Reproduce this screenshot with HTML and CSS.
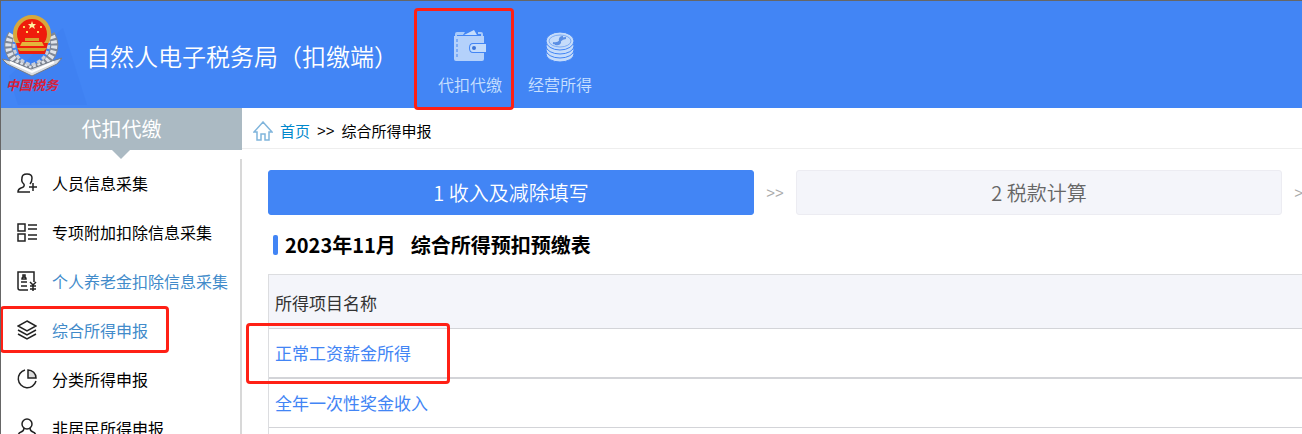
FILE: index.html
```html
<!DOCTYPE html>
<html lang="zh-CN">
  <head>
    <meta charset="UTF-8" />
    <meta name="viewport" content="width=device-width, initial-scale=1.0" />
    <title>自然人电子税务局（扣缴端）</title>
    <link rel="stylesheet" href="styles.css">
  </head>

  <body>
    <header class="header">
      <div class="logo">
        <svg class="logo_shade" viewBox="0 0 86 104" width="86" height="104">
          <path d="M62 27L86 104H17L8 75z" fill="#3f81f2" />
        </svg>
        <svg class="emblem" viewBox="0 0 60 62" width="60" height="62">
          <path d="M10 19C1 33 9 49 29 54C50 49 57 33 49 19" fill="none" stroke="#7f8796" stroke-width="8" />
          <path d="M10 19C1 33 9 49 29 54C50 49 57 33 49 19" fill="none" stroke="#dfe3ea" stroke-width="6" stroke-dasharray="3 2" />
          <path d="M13 23C9 36 16 46 29 50C43 46 49 35 46 23" fill="none" stroke="#c9ced8" stroke-width="3" stroke-dasharray="4 2" />
          <path d="M0 44L9 46L29 54L50 46L60 43L55 49L30 61L5 49z" fill="#d8dce2" stroke="#747b86" />
          <path d="M8 47L30 57L52 47" fill="none" stroke="#fff" stroke-width="2" />
          <ellipse cx="30" cy="19" rx="17" ry="17" fill="#ef1c0c" stroke="#d7a83c" stroke-width="4" />
          <path d="M14 28H46L43 39H17z" fill="#ee1e0c" />
          <path d="M20 27H40L42 31H18z" fill="#e5b53b" />
          <path d="M23 23H37V26H23zM15 33H45L42 36H18z" fill="#d8a02c" />
          <path d="M30 6l1 3h3l-2 2 1 3-3-2-3 2 1-3-2-2h3z" fill="#fff3a0" />
          <path d="M21 11h2v2h-2zM24 16h2v2h-2zM35 16h2v2h-2zM38 11h2v2h-2z" fill="#ffd75a" />
        </svg>
        <span class="logo_text">中国税务</span>
      </div>
      <h1 class="title">自然人电子税务局（扣缴端）</h1>
      <nav class="top_nav">
        <a class="top_item marked" href="#">
          <svg viewBox="0 0 34 34" width="34" height="34">
            <path d="M2 7V4Q2 2 4 2H12L10 5H4V6H28V4H25V2H28Q30 2 30 4V10H2z" fill="#a9cbfa" />
            <path d="M11 5L21 0L24 5z" fill="#c4dcfc" />
            <path d="M1 6H31V13H20Q16 13 16 18T20 23H31V29Q31 31 29 31H3Q1 31 1 29z" fill="#b4d1fb" />
            <path d="M4 9V29" stroke="#4285f5" stroke-width="1" stroke-dasharray="3 2" />
            <path d="M20 14H33V22H20Q17 22 17 18T20 14z" fill="#c4dcfc" />
            <circle cx="21" cy="18" r="2" fill="#3c75d8" />
          </svg>
          代扣代缴
        </a>
        <a class="top_item" href="#">
          <svg viewBox="0 0 34 34" width="34" height="34">
            <g fill="#c5dcfb" stroke="#4285f5">
              <ellipse cx="17" cy="24" rx="14" ry="8" />
              <ellipse cx="17" cy="20" rx="14" ry="8" />
              <ellipse cx="17" cy="16" rx="14" ry="8" />
              <ellipse cx="17" cy="11" rx="14" ry="9" />
            </g>
            <ellipse cx="17" cy="11" rx="11" ry="6" fill="none" stroke="#7dacf4" />
            <path d="M10 13Q15 14 17 11T23 8M20 7Q16 7 17 11T12 14" fill="none" stroke="#5b8fe4" stroke-width="2" />
          </svg>
          经营所得
        </a>
      </nav>
    </header>

    <div class="container">
      <aside class="sidebar">
        <h2 class="sidebar_title">代扣代缴</h2>
        <ul class="menu">
          <li>
            <a class="menu_item" href="#">
              <svg viewBox="0 0 20 20" width="20" height="20">
                <path d="M7 11Q4 9 5 5Q5 1 10 1T15 5Q15 9 13 11M7 11Q8 14 4 15Q1 16 1 19H13M16 10V18M12 14H20" />
              </svg>
              人员信息采集
            </a>
          </li>
          <li>
            <a class="menu_item" href="#">
              <svg viewBox="0 0 20 20" width="20" height="20">
                <path d="M1 2H8V9H1zM1 12H8V19H1zM11 3H20M11 7H20M11 13H20M11 17H20" />
              </svg>
              专项附加扣除信息采集
            </a>
          </li>
          <li>
            <a class="menu_item active" href="#">
              <svg viewBox="0 0 20 20" width="20" height="20">
                <path d="M11 19H3Q1 19 1 17V1H17V11" />
                <path d="M4 11H10M4 15H10" />
                <path d="M5 8Q5 6 7 6T9 8zM6 4H8V6H6z" />
                <path d="M13 11L16 14L19 11M16 14V20M13 15H19M13 18H19" />
              </svg>
              个人养老金扣除信息采集
            </a>
          </li>
          <li>
            <a class="menu_item active marked" href="#">
              <svg viewBox="0 0 20 20" width="20" height="20">
                <path d="M10 1L19 6L10 11L1 6zM1 10L10 15L19 10M1 14L10 19L19 14" />
              </svg>
              综合所得申报
            </a>
          </li>
          <li>
            <a class="menu_item" href="#">
              <svg viewBox="0 0 20 20" width="20" height="20">
                <path d="M8 1A9 9 0 1 0 19 12" />
                <path d="M11 1V9H19A8 8 0 0 0 11 1z" fill="#ddd" />
              </svg>
              分类所得申报
            </a>
          </li>
          <li>
            <a class="menu_item" href="#">
              <svg viewBox="0 0 20 20" width="20" height="20">
                <circle cx="10" cy="6" r="5" />
                <path d="M7 10Q7 13 4 14Q1 15 1 19H19Q19 15 16 14Q13 13 13 10" />
              </svg>
              非居民所得申报
            </a>
          </li>
        </ul>
      </aside>

      <main class="content">
        <div class="breadcrumb">
          <svg viewBox="0 0 20 20" width="20" height="20">
            <path d="M1 11L10 1L19 11H16V19H12V13H8V19H4V11z" />
          </svg>
          <a href="#">首页</a>
          <span class="sep">&gt;&gt;</span>
          <span>综合所得申报</span>
        </div>

        <div class="steps">
          <button class="step current" type="button">1 收入及减除填写</button>
          <span class="step_arrow">&gt;&gt;</span>
          <button class="step" type="button">2 税款计算</button>
          <span class="step_arrow">&gt;&gt;</span>
        </div>

        <h3 class="form_title">
          <span>2023年11月</span>
          <span>综合所得预扣预缴表</span>
        </h3>

        <table class="income">
          <thead>
            <tr><th>所得项目名称</th></tr>
          </thead>
          <tbody>
            <tr class="selected"><td><a class="marked" href="#">正常工资薪金所得</a></td></tr>
            <tr><td><a href="#">全年一次性奖金收入</a></td></tr>
            <tr><td></td></tr>
          </tbody>
        </table>
      </main>
    </div>
  </body>
</html>
```
FILE: styles.css
```css
*,
*::before,
*::after {
  box-sizing: border-box;
}

body {
  display: flex;
  flex-direction: column;
  height: 100vh;
  margin: 0;
  overflow: hidden;
  border-top: 1px solid #666;
  border-left: 1px solid #666;
  background-color: #fff;
  color: #000;
  font-family: "Noto Sans CJK SC", sans-serif;
  font-size: 16px;
}

a {
  color: #4285f5;
  text-decoration: none;
}

.header {
  display: flex;
  flex-shrink: 0;
  height: 107px;
  background-color: #4285f5;
}

.logo {
  position: relative;
  display: flex;
  flex-direction: column;
  align-items: center;
  width: 85px;
  padding: 14px 23px 0 0;
}

.logo_shade {
  position: absolute;
  top: 0;
  left: 0;
}

.emblem {
  position: relative;
  flex-shrink: 0;
}

.logo_text {
  position: relative;
  color: #d9203a;
  font-size: 13px;
  font-style: italic;
  font-weight: 700;
  line-height: 16px;
  white-space: nowrap;
}

.title {
  margin: 0;
  color: #fff;
  font-size: 24px;
  font-weight: 350;
  line-height: 110px;
  white-space: nowrap;
}

.top_nav {
  display: flex;
  padding-top: 7px;
  margin-left: 27px;
}

.top_item {
  display: flex;
  flex-direction: column;
  align-items: center;
  width: 90px;
  padding-top: 22px;
  color: #c9e0ff;
  font-weight: 350;
  line-height: 24px;
}

.top_item svg {
  margin-bottom: 8px;
}

/* red frames round the places to click */
.marked {
  position: relative;
}

.marked::after {
  content: "";
  position: absolute;
  border: 3px solid #ff2015;
  border-radius: 4px;
}

.top_item.marked::after {
  top: 0;
  left: -11px;
  width: 100px;
  height: 102px;
}

.menu_item.marked::after {
  top: 0;
  left: -1px;
  width: 169px;
  height: 47px;
}

.income .marked::after {
  top: -17px;
  left: -29px;
  width: 204px;
  height: 61px;
}

.container {
  display: flex;
  flex: 1;
  min-height: 0;
}

.sidebar {
  flex-shrink: 0;
  width: 241px;
}

.sidebar_title {
  position: relative;
  margin: 0 0 9px;
  background-color: #abbac3;
  color: #fff;
  font-size: 20px;
  font-weight: 400;
  line-height: 42px;
  text-align: center;
}

.sidebar_title::after {
  content: "";
  position: absolute;
  top: 42px;
  left: 111px;
  border: 9px solid transparent;
  border-top-color: #abbac3;
  border-bottom: 0;
}

.menu {
  margin: 0;
  padding: 0;
  border-right: 2px solid #d8d8d8;
  list-style: none;
}

.menu_item {
  display: flex;
  align-items: center;
  gap: 15px;
  height: 49px;
  padding: 0 0 2px 16px;
  color: #000;
  white-space: nowrap;
}

.menu_item.active {
  color: #428bca;
}

.menu_item svg {
  fill: none;
  stroke: #222;
  stroke-width: 1.5;
}

.content {
  flex: 1;
  min-width: 0;
}

.breadcrumb {
  display: flex;
  align-items: center;
  height: 41px;
  padding: 5px 11px 0;
  border-bottom: 1px solid #eee;
  font-size: 15px;
}

.breadcrumb svg {
  margin-right: 7px;
  fill: none;
  stroke: #80b5dc;
  stroke-width: 1.5;
}

.breadcrumb a {
  color: #0088cc;
}

.breadcrumb .sep {
  margin: 0 7px;
  font-family: "Liberation Sans", sans-serif;
}

.steps {
  display: flex;
  padding: 21px 0 0 26px;
  overflow: hidden;
}

.step {
  flex: 0 0 47%;
  height: 45px;
  padding: 0;
  border: 1px solid #ececf2;
  border-radius: 3px;
  background-color: #f4f5fa;
  color: #666;
  font-family: inherit;
  font-size: 20px;
  font-weight: 350;
}

.step.current {
  border-color: #4285f5;
  background-color: #4285f5;
  color: #fff;
}

.step_arrow {
  flex: 0 0 42px;
  color: #aaa;
  font-family: "Liberation Sans", sans-serif;
  font-size: 15px;
  line-height: 46px;
  text-align: center;
}

.form_title {
  display: flex;
  align-items: center;
  gap: 15px;
  margin: 0 0 0 30px;
  padding-left: 1px;
  font-size: 20px;
  line-height: 58px;
}

.form_title::before {
  content: "";
  width: 5px;
  height: 20px;
  margin-right: -8px;
  border-radius: 2px;
  background-color: #4285f5;
}

.income {
  width: calc(100% - 26px);
  margin-left: 26px;
  border-collapse: separate;
  border-spacing: 0;
  border-top: 1px solid #dcdde0;
  border-left: 1px solid #dcdde0;
  font-size: 17px;
  line-height: 26px;
}

.income th,
.income td {
  height: 49px;
  padding: 0 6px;
  border-bottom: 1px solid #d3d4d8;
  font-weight: 400;
  text-align: left;
}

.income th {
  height: 54px;
  padding-top: 3px;
  background-color: #f4f5fa;
  color: #333;
}

.income .selected td {
  height: 50px;
  border-bottom-width: 2px;
}
```
